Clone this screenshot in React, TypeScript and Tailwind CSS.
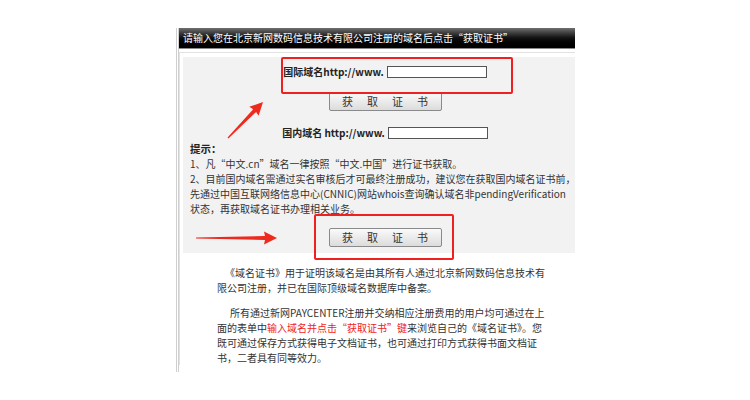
import React from 'react';

const font = { fontFamily: '"Noto Sans CJK SC", "Noto Sans", sans-serif' };

function Arrow({ x1, y1, x2, y2 }: { x1: number; y1: number; x2: number; y2: number }) {
  const dx = x2 - x1;
  const dy = y2 - y1;
  const len = Math.sqrt(dx * dx + dy * dy);
  const angle = (Math.atan2(dy, dx) * 180) / Math.PI;
  const L = len;
  const pts = `0,-0.6 ${L - 12},-2 ${L - 13},-6.5 ${L},0 ${L - 13},6.5 ${L - 12},2 0,0.6`;
  return (
    <g transform={`translate(${x1} ${y1}) rotate(${angle})`}>
      <polygon points={pts} fill="#ee2a1e" />
    </g>
  );
}

function GetButton() {
  return (
    <button className="w-[113px] h-[19px] border border-[#8a8a8a] rounded-[2px] bg-gradient-to-b from-[#fafafa] to-[#dcdcdc] flex items-center justify-center gap-[14px] text-[11px] text-[#333] leading-none">
      <span>获</span>
      <span>取</span>
      <span>证</span>
      <span>书</span>
    </button>
  );
}

function DomainRow({ label }: { label: string }) {
  return (
    <div className="h-[16px] flex items-center justify-center gap-[3px] pl-[12px]">
      <span className="text-[10px] font-bold text-[#222] whitespace-nowrap leading-none">{label}</span>
      <input
        type="text"
        readOnly
        className="w-[100px] h-[12px] bg-white border border-[#555] outline-none"
      />
    </div>
  );
}

export default function App() {
  return (
    <div className="relative w-[750px] h-[400px] bg-white overflow-hidden" style={font}>
      <div className="w-[399px] ml-[176px] pt-[28px]">
        <div className="border-l-[3px] border-double border-[#cfcfcf] pb-[7px]">
          {/* header */}
          <div className="h-[21px] bg-gradient-to-b from-[#707070] via-[#111] to-black border-b border-[#8a8a8a] flex items-center pl-[4px]">
            <span className="text-white text-[10px] leading-none whitespace-nowrap">
              请输入您在北京新网数码信息技术有限公司注册的域名后点击“获取证书”
            </span>
          </div>

          <div className="mt-[3px] border-t border-l border-[#e2e2e2] pt-[4px] pl-[3px]">
            {/* grey panel */}
            <div className="bg-[#f2f2f2] pt-[7px] pb-[6px]">
              <DomainRow label="国际域名http://www." />
              <div className="mt-[12px] flex justify-center pl-[12px]">
                <GetButton />
              </div>
              <div className="mt-[14px]">
                <DomainRow label="国内域名 http://www." />
              </div>
              <div className="px-[7px] text-[10px] leading-[15px] text-[#333] whitespace-nowrap">
                <p className="font-bold text-[10.5px] text-[#222]">提示：</p>
                <p>1、凡“中文.cn”域名一律按照“中文.中国”进行证书获取。</p>
                <p>2、目前国内域名需通过实名审核后才可最终注册成功，建议您在获取国内域名证书前，</p>
                <p>先通过中国互联网络信息中心(CNNIC)网站whois查询确认域名非pendingVerification</p>
                <p>状态，再获取域名证书办理相关业务。</p>
              </div>
              <div className="mt-[12px] flex justify-center pl-[12px]">
                <GetButton />
              </div>
            </div>

            {/* description */}
            <div className="pl-[34px] text-[10px] leading-[15px] text-[#333] whitespace-nowrap">
              <p className="mt-[12px] indent-[8px]">
                《域名证书》用于证明该域名是由其所有人通过北京新网数码信息技术有
                <br />
                限公司注册，并已在国际顶级域名数据库中备案。
              </p>
              <p className="mt-[10px] indent-[13px]">
                所有通过新网PAYCENTER注册并交纳相应注册费用的用户均可通过在上
                <br />
                面的表单中<span className="text-[#f01d1d]">输入域名并点击“获取证书”键</span>来浏览自己的《域名证书》。您
                <br />
                既可通过保存方式获得电子文档证书，也可通过打印方式获得书面文档证
                <br />
                书，二者具有同等效力。
              </p>
            </div>
          </div>
        </div>
      </div>

      {/* annotations */}
      <div className="absolute left-[281px] top-[57px] w-[232px] h-[37px] border-2 border-[#f02020] rounded-[2px] pointer-events-none" />
      <div className="absolute left-[314px] top-[214px] w-[140px] h-[46px] border-2 border-[#f02020] rounded-[2px] pointer-events-none" />
      <svg className="absolute left-0 top-0 pointer-events-none" width="750" height="400" viewBox="0 0 750 400">
        <Arrow x1={228} y1={138} x2={263} y2={102} />
        <Arrow x1={196} y1={238} x2={277} y2={238} />
      </svg>
    </div>
  );
}
